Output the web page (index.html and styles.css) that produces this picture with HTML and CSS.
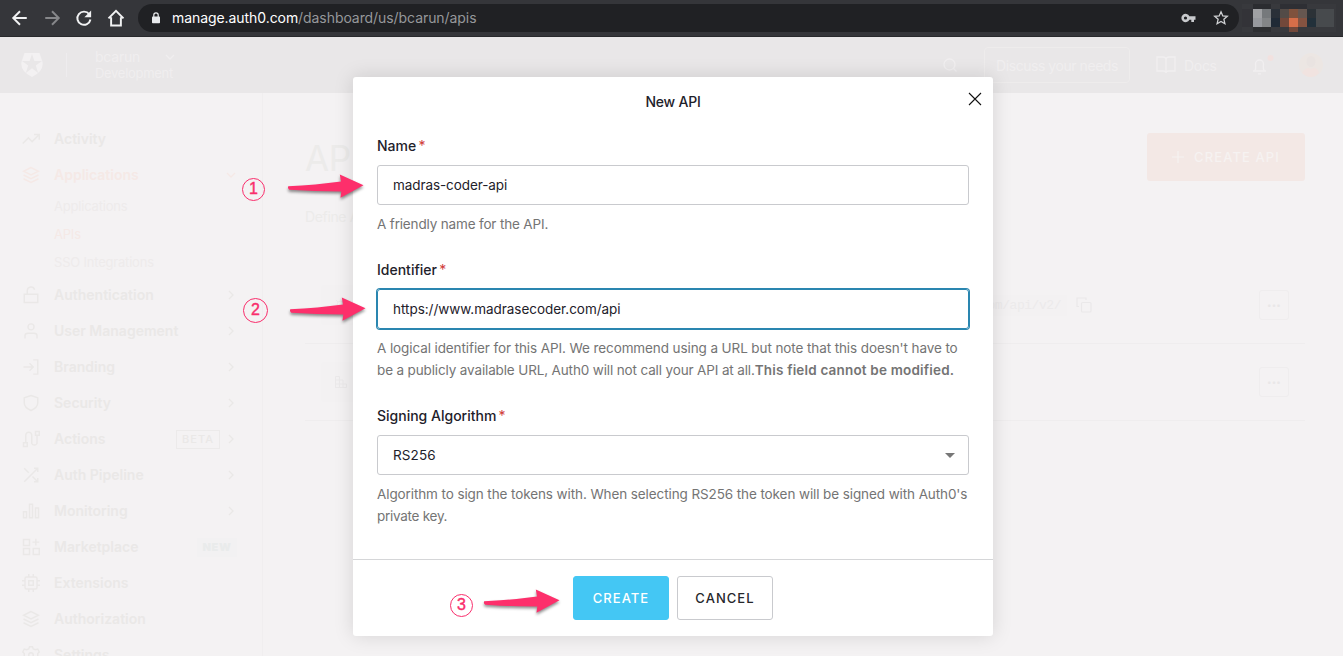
FILE: index.html
```
<!DOCTYPE html>
<html lang="en">
<head>
<meta charset="utf-8">
<title>New API</title>
<link rel="stylesheet" href="styles.css">
</head>
<body>
<svg class="defs" width="0" height="0">
  <defs>
    <symbol id="right" viewBox="0 0 16 16"><path d="M6 4l4 4-4 4"/></symbol>
    <symbol id="down" viewBox="0 0 16 16"><path d="M4 6l4 4 4-4"/></symbol>
    <symbol id="layers" viewBox="0 0 24 24"><path d="M12 2L2 7l10 5 10-5zM2 12l10 5 10-5M2 17l10 5 10-5"/></symbol>
    <symbol id="arrow" viewBox="0 0 80 28"><path d="M2.2 13.2Q30 12 55 8.5L53.8 1.5L77.5 12.2L54.5 24.8L55.3 18.6Q28 18.5 3.2 16.8Q1.2 15 2.2 13.2z"/></symbol>
  </defs>
</svg>
<div class="browser">
  <svg class="nav-icon" viewBox="0 0 24 24"><path d="M21 12H4M12 3l-9 9 9 9"/></svg>
  <svg class="nav-icon dim" viewBox="0 0 24 24"><path d="M3 12h17M12 3l9 9-9 9"/></svg>
  <svg class="nav-icon" viewBox="0 0 24 24"><path d="M19 7A8.8 8.8 0 1 0 20.6 14"/><path class="solid" d="M21.500 2v9h-9z"/></svg>
  <svg class="nav-icon" viewBox="0 0 24 24"><path d="M5.500 11v11h13V11M2 12.500L12 2.500l10 10"/></svg>
  <div class="omnibox">
    <svg class="lock" viewBox="0 0 10 12"><rect x="1" y="4.6" width="8" height="6.6" rx=".8"/><path d="M2.8 5V3a2.2 2.2 0 0 1 4.4 0v2"/></svg>
    <div class="url"><span class="host">manage.auth0.com</span><span class="path">/dashboard/us/bcarun/apis</span></div>
    <svg class="key" viewBox="0 0 15 10"><path fill-rule="evenodd" d="M8.4 3.3A4.2 4.2 0 1 0 8.4 6.7H10.3V9H13V6.7H14.5V3.3zM4.5 3.4a1.6 1.6 0 1 1 0 3.2 1.6 1.6 0 0 1 0-3.2z"/></svg>
    <svg class="star" viewBox="0 0 16 16"><path d="M8 1.8l1.8 4.1 4.5.4-3.4 3 1 4.4L8 11.4l-3.900 2.300 1-4.400-3.400-3 4.500-.4z"/></svg>
  </div>
  <svg class="mosaic" viewBox="0 0 94 28">
    <rect width="94" height="28" fill="#38393d"/><rect x="11" width="18" height="5" fill="#2b2c30"/><rect x="38" width="27" height="5" fill="#2e2f34"/>
    <rect y="5" width="11" height="18" fill="#333338"/><rect x="11" y="5" width="9" height="9" fill="#a0a1a4"/><rect x="11" y="14" width="9" height="9" fill="#97999e"/><rect x="20" y="5" width="9" height="9" fill="#76797c"/><rect x="20" y="14" width="9" height="9" fill="#838587"/>
    <rect x="29" y="5" width="9" height="9" fill="#2a3038"/><rect x="29" y="14" width="9" height="9" fill="#202a36"/><rect x="38" y="5" width="9" height="9" fill="#534b47"/><rect x="38" y="14" width="9" height="9" fill="#72483a"/><rect x="47" y="5" width="9" height="9" fill="#80523d"/><rect x="47" y="14" width="9" height="9" fill="#d66e49"/><rect x="56" y="5" width="9" height="9" fill="#665750"/><rect x="56" y="14" width="9" height="9" fill="#855341"/>
    <rect x="65" y="5" width="9" height="9" fill="#2c3237"/><rect x="65" y="14" width="9" height="9" fill="#22303a"/><rect x="74" y="5" width="18" height="18" fill="#474a4d"/><rect x="47" y="23" width="9" height="5" fill="#72483a"/><rect x="11" y="23" width="18" height="5" fill="#2d2e31"/>
  </svg>
</div>

<div class="app">
  <header class="topbar">
    <svg class="logo" viewBox="0 0 22 24"><path class="shield" d="M3.500 0h15L21.500 9Q23 18 11 24Q-1 18 .5 9z"/><path class="cut" d="M11 1l2.400 7H21l-6.200 4.500L17.200 20 11 15.300 4.800 20l2.400-7.500L1 8h7.600z"/></svg>
    <div class="tenant"><div class="tenant-name">bcarun <svg class="chev"><use href="#down"/></svg></div><div class="env">Development</div></div>
    <svg class="line-icon search" viewBox="0 0 16 16"><circle cx="7.500" cy="7.500" r="5.500"/><path d="M11.500 11.500l3 3"/></svg>
    <div class="discuss">Discuss your needs</div>
    <svg class="line-icon book" viewBox="0 0 20 18"><path d="M1 1h6q3 0 3 3v13q0-2-3-2H1zM19 1h-6q-3 0-3 3v13q0-2 3-2h6z"/></svg>
    <div class="docs">Docs</div>
    <svg class="line-icon bell" viewBox="0 0 22 20"><path d="M1 16h13M2.500 16q1.700-2 1-7a4 4 0 0 1 8 0q-.7 5 1 7M6 18.800h3"/><circle class="dot" cx="18.500" cy="3" r="3"/></svg>
    <svg class="avatar" viewBox="0 0 24 24"><circle cx="12" cy="12" r="12" fill="#ece6e3"/><ellipse cx="12" cy="8.500" rx="4.500" ry="5.500" fill="#e9e3e1"/><path d="M3 20q4-7 9-4 6-3 8 4-8 8-17 0z" fill="#f1e3e0"/></svg>
  </header>
  <div class="body">
    <nav class="sidebar">
      <div class="item"><svg class="ic" viewBox="0 0 24 24"><path d="M1 18L8.500 10.500l5 5L23 6M16 6h7v7"/></svg><span>Activity</span></div>
      <div class="item active"><svg class="ic"><use href="#layers"/></svg><span>Applications</span><svg class="chev"><use href="#down"/></svg></div>
      <div class="sub">Applications</div><div class="sub active">APIs</div><div class="sub">SSO Integrations</div>
      <div class="item"><svg class="ic" viewBox="0 0 24 24"><path d="M3 11h18v11H3zM7 11V6a5 5 0 0 1 9.800-1"/></svg><span>Authentication</span><svg class="chev"><use href="#right"/></svg></div>
      <div class="item"><svg class="ic" viewBox="0 0 24 24"><path d="M4 22v-4q0-3 4-3h8q4 0 4 3v4"/><circle cx="12" cy="6.500" r="4"/></svg><span>User Management</span><svg class="chev"><use href="#right"/></svg></div>
      <div class="item"><svg class="ic" viewBox="0 0 24 24"><path d="M15 2.500h6v19h-6M2 12h13M10 7l5 5-5 5"/></svg><span>Branding</span><svg class="chev"><use href="#right"/></svg></div>
      <div class="item"><svg class="ic" viewBox="0 0 24 24"><path d="M12 2l9 3v7q0 6-9 10-9-4-9-10V5z"/></svg><span>Security</span><svg class="chev"><use href="#right"/></svg></div>
      <div class="item"><svg class="ic" viewBox="0 0 24 24"><path d="M2 17h5v5H2zM18 2h5v5h-5zM5 17V7a4 4 0 0 1 8 0v11a4 4 0 0 0 7 0V7"/></svg><span>Actions</span><b class="beta">BETA</b><svg class="chev"><use href="#right"/></svg></div>
      <div class="item"><svg class="ic" viewBox="0 0 24 24"><path d="M16 3h5v5M3 21L21 3M21 16v5h-5M14 14l7 7M3 3l6 6"/></svg><span>Auth Pipeline</span><svg class="chev"><use href="#right"/></svg></div>
      <div class="item"><svg class="ic" viewBox="0 0 24 24"><path d="M2 13h4v8H2zM10 3h4v18h-4zM18 8h4v13h-4z"/></svg><span>Monitoring</span><svg class="chev"><use href="#right"/></svg></div>
      <div class="item"><svg class="ic" viewBox="0 0 24 24"><path d="M2 2h8v8H2zM2 14h8v8H2zM15 14h8v8h-8zM18.500 1v9M14 5.500h9"/></svg><span>Marketplace</span><b class="new">NEW</b></div>
      <div class="item"><svg class="ic" viewBox="0 0 24 24"><rect x="4" y="4" width="16" height="16" rx="2"/><path d="M9 9h6v6H9zM9 0v4M15 0v4M9 20v4M15 20v4M20 9h4M20 15h4M0 9h4M0 15h4"/></svg><span>Extensions</span></div>
      <div class="item"><svg class="ic"><use href="#layers"/></svg><span>Authorization</span></div>
      <div class="item"><svg class="ic" viewBox="0 0 24 24"><circle cx="12" cy="12" r="3"/><path d="M10 1h4l1 3 3 1 3-1 2 4-2 2v4l2 2-2 4-3-1-3 1-1 3h-4l-1-3-3-1-3 1-2-4 2-2v-4L1 8l2-4 3 1 3-1z"/></svg><span>Settings</span></div>
    </nav>
    <main class="main">
      <div class="heading"><h1>APIs</h1><div class="create-api"><svg viewBox="0 0 12 12"><path d="M6 0v12M0 6h12"/></svg>CREATE API</div></div>
      <p class="intro">Define APIs</p>
      <div class="row"><div class="tile"><svg viewBox="0 0 16 16"><circle cx="8" cy="8" r="4"/><path d="M3 3l2 2M13 3l-2 2M8 1v3"/></svg></div><div class="code"><span>https://bcarun.auth0.com/api/v2/</span><svg viewBox="0 0 16 16"><path d="M3 9.500H1V1h9v2"/><rect x="5.500" y="5.500" width="9.500" height="9.500" rx="1"/></svg></div><div class="more">•••</div></div>
      <div class="row"><div class="tile"><svg viewBox="0 0 16 16"><path d="M2.500 2.500h4v11h-4zM2.500 6h4M2.500 10h11v3.500h-11zM6.500 6h3.500v7.500"/></svg></div><div class="more">•••</div></div>
    </main>
  </div>
</div>

<section class="modal">
  <h2>New API</h2>
  <svg class="close" viewBox="0 0 14 14"><path d="M1 1l12 12M13 1L1 13"/></svg>
  <div class="form">
    <div class="field"><label>Name <i>*</i></label><div class="input name-value">madras-coder-api</div><p class="name-help">A friendly name for the API.</p></div>
    <div class="field"><label>Identifier <i>*</i></label><div class="input focus">https://www.madrasecoder.com/api</div><p>A logical identifier for this API. We recommend using a URL but note that this doesn't have to<br><span class="tight">be a publicly available URL, Auth0 will not call your API at all.</span><b>This field cannot be modified.</b></p></div>
    <div class="field"><label>Signing Algorithm <i>*</i></label><div class="input algorithm">RS256<svg class="caret" viewBox="0 0 10 5"><path d="M0 0h10L5 5z"/></svg></div><p>Algorithm to sign the tokens with. When selecting RS256 the token will be signed with Auth0's<br><span class="tighter">private key.</span></p></div>
  </div>
  <footer><button class="create">CREATE</button><button class="cancel">CANCEL</button></footer>
</section>

<div class="mark m1">1</div><svg class="pointer p1"><use href="#arrow"/></svg>
<div class="mark m2">2</div><svg class="pointer p2"><use href="#arrow"/></svg>
<div class="mark m3">3</div><svg class="pointer p3"><use href="#arrow"/></svg>
</body>
</html>
```
FILE: styles.css
```
* { box-sizing: border-box; }
body { margin: 0; width: 1343px; height: 656px; overflow: hidden; position: relative; background: #f4f2f3; font-family: Inter, "Liberation Sans", sans-serif; font-size: 14px; color: #1e212a; }
svg { display: block; flex: none; }
.defs { position: absolute; }
h1, h2, p { margin: 0; font-weight: 400; }

.browser { height: 37px; background: #35363a; border-bottom: 1px solid #28292c; display: flex; align-items: center; padding-left: 11px; }
.nav-icon { width: 18px; height: 18px; margin-right: 14px; fill: none; stroke: #f1f2f3; stroke-width: 2.600; }
.nav-icon.dim { stroke: #86878a; }
.nav-icon .solid { fill: #f1f2f3; stroke: none; }
.nav-icon:nth-child(4) { margin-right: 13px; }
.omnibox { width: 1101px; height: 28px; border-radius: 14px; background: #202124; display: flex; align-items: center; padding: 0 10px 0 13px; margin-right: 3px; }
.lock { width: 10px; height: 12px; fill: #e8eaed; margin-right: 11px; }
.lock path { fill: none; stroke: #e8eaed; stroke-width: 1.200; }
.url { flex: 1; font-size: 14px; letter-spacing: -.07px; padding-bottom: 1px; white-space: nowrap; color: #96989b; }
.host { color: #fff; }
.key { width: 15px; height: 10px; fill: #c8cacd; margin-right: 17px; }
.star { width: 16px; height: 16px; fill: none; stroke: #d0d2d4; stroke-width: 1.300; }
.mosaic { width: 94px; height: 28px; }

.topbar { height: 56px; background: #e9e7e8; display: flex; align-items: center; padding: 0 18px 0 21px; color: #f0eeef; }
.logo { width: 22px; height: 24px; }
.shield { fill: #f3f1f2; }
.cut { fill: #e9e7e8; }
.tenant { margin-left: 23px; border-left: 1px solid #eeecee; padding-left: 28px; height: 24px; display: flex; flex-direction: column; justify-content: center; line-height: 17px; width: 875px; }
.tenant-name { display: flex; align-items: center; letter-spacing: -.2px; }
.chev { width: 16px; height: 16px; fill: none; stroke: currentColor; stroke-width: 1.300; }
.tenant .chev { margin-left: 22px; }
.env { font-size: 13px; letter-spacing: -.3px; }
.line-icon { fill: none; stroke: #f1eff0; stroke-width: 1.300; }
.search { width: 16px; height: 16px; margin-left: 1px; }
.discuss { width: 146px; height: 36px; border: 1px solid #eeecec; border-radius: 4px; margin-left: 26px; display: flex; align-items: center; justify-content: center; letter-spacing: -.45px; }
.book { width: 20px; height: 18px; margin-left: 26px; }
.docs { margin-left: 8px; width: 35px; letter-spacing: -.3px; }
.bell { width: 22px; height: 20px; margin-left: 33px; }
.bell .dot { fill: #f2e1df; stroke: none; }
.avatar { width: 24px; height: 24px; margin-left: 25px; }

.body { display: flex; height: 563px; }
.sidebar { width: 263px; border-right: 1px solid #f0eeef; padding: 28px 23px 0 22px; color: #eae8e7; }
.item { height: 36px; display: flex; align-items: center; font-weight: 600; }
.item span { flex: 1; letter-spacing: 0; padding-bottom: 1px; }
.ic { width: 18px; height: 18px; margin-right: 14px; fill: none; stroke: currentColor; stroke-width: 1.900; }
.item.active, .sub.active { color: #f5e9e6; }
.sub { height: 28px; line-height: 27px; padding-left: 32px; font-size: 13px; letter-spacing: -.2px; color: #eeebeb; }
.beta { font-size: 11px; font-weight: 500; letter-spacing: 1px; border: 1px solid #eceaea; width: 44px; height: 19px; display: grid; place-items: center; margin-right: 3px; }
.new { font-size: 11px; letter-spacing: .7px; color: #e9ebeb; background: #f2f1f2; width: 40px; height: 19px; display: grid; place-items: center; margin-right: 2px; }
.main { width: 1000px; margin-left: 42px; padding-top: 40px; color: #ecebea; }
.heading { display: flex; justify-content: space-between; align-items: center; height: 48px; }
h1 { font-size: 35px; letter-spacing: -.3px; padding-top: 2px; }
.create-api { width: 158px; height: 48px; border-radius: 3px; background: #f3e8e5; color: #f6f2f1; font-size: 13px; font-weight: 500; letter-spacing: 1.100px; display: flex; align-items: center; justify-content: center; gap: 10px; }
.create-api svg { width: 12px; height: 12px; stroke: #f6f2f1; stroke-width: 1.200; }
.intro { height: 86px; padding-top: 26px; line-height: 20px; letter-spacing: -.35px; }
.row { height: 77px; border-bottom: 1px solid #efedee; display: flex; align-items: center; padding: 0 16px; }
.tile { width: 40px; height: 40px; background: #f3f1f2; border-radius: 3px; display: grid; place-items: center; }
.tile svg { width: 16px; height: 16px; fill: none; stroke: #ebe9ea; }
.code { margin-left: 456px; display: flex; align-items: center; gap: 9px; width: 275px; justify-content: flex-end; }
.code span { font: 13px "Liberation Mono", monospace; letter-spacing: -.45px; background: #f3f1f2; padding: 3px 6px; color: #eceaeb; }
.code svg { width: 16px; height: 16px; fill: none; stroke: #eae8e9; stroke-width: 1.200; }
.more { width: 30px; height: 30px; border: 1px solid #efedee; border-radius: 3px; margin-left: auto; display: grid; place-items: center; font-size: 8px; letter-spacing: .2px; color: #e9e7e8; }

.modal { position: absolute; left: 353px; top: 77px; width: 640px; height: 559px; background: #fff; border-radius: 3px; box-shadow: 0 0 20px rgba(0,0,0,.13); }
h2 { font-size: 14px; font-weight: 500; letter-spacing: -.2px; text-align: center; line-height: 22px; padding-top: 14px; height: 58px; }
.close { position: absolute; right: 11px; top: 15px; width: 14px; height: 14px; stroke: #111; stroke-width: 1.100; }
.form { padding: 0 24px; height: 424px; display: flex; flex-direction: column; gap: 24px; }
.field { display: flex; flex-direction: column; gap: 8px; }
label { font-weight: 500; line-height: 22px; }
label i { color: #d03c38; font-style: normal; font-weight: 400; margin-left: -1.500px; }
.input { height: 40px; border: 1px solid #c9cace; border-radius: 3px; padding: 0 13px 1px 15px; display: flex; align-items: center; justify-content: space-between; font-size: 13.500px; letter-spacing: -.03px; }
.input.name-value { letter-spacing: -.08px; }
.input.algorithm { letter-spacing: .1px; }
.input.focus { border-color: #2a86b0; box-shadow: 0 0 0 1px #2a86b0; }
.caret { width: 10px; height: 5px; fill: #777; margin-top: 1px; }
.field p { color: #747474; font-size: 13.500px; letter-spacing: -.1px; line-height: 22px; white-space: nowrap; }
.field p.name-help { letter-spacing: -.16px; }
.field .tight { letter-spacing: -.14px; }
.field .tighter { letter-spacing: -.27px; }
.field p b { font-weight: 600; letter-spacing: .18px; }
footer { border-top: 1px solid #d5d6d8; height: 77px; display: flex; justify-content: center; gap: 8px; padding-top: 16px; }
button { width: 96px; height: 44px; padding: 0; border-radius: 3px; font: 500 13px Inter, sans-serif; letter-spacing: 1.050px; border: 1px solid #c9cace; background: #fff; color: #26272b; }
.create { background: #44c7f4; border-color: #44c7f4; color: #fff; }

.mark { position: absolute; width: 23px; height: 23px; border: 1.500px solid #f92e6c; border-radius: 50%; color: #f92e6c; font: 16px/20px "Liberation Sans", Arial, sans-serif; -webkit-text-stroke: .4px #f92e6c; text-align: center; }
.m1 { left: 242px; top: 178px; }
.m2 { left: 243px; top: 298px; width: 25px; height: 25px; line-height: 22px; }
.m3 { left: 450px; top: 594px; }
.pointer { position: absolute; width: 80px; height: 28px; fill: #fd2f6b; filter: drop-shadow(0 2px 1.500px rgba(0,0,0,.45)); overflow: visible; }
.p1 { left: 285.500px; top: 173px; }
.p2 { left: 288px; top: 295.500px; }
.p3 { left: 481.500px; top: 588px; }
```
